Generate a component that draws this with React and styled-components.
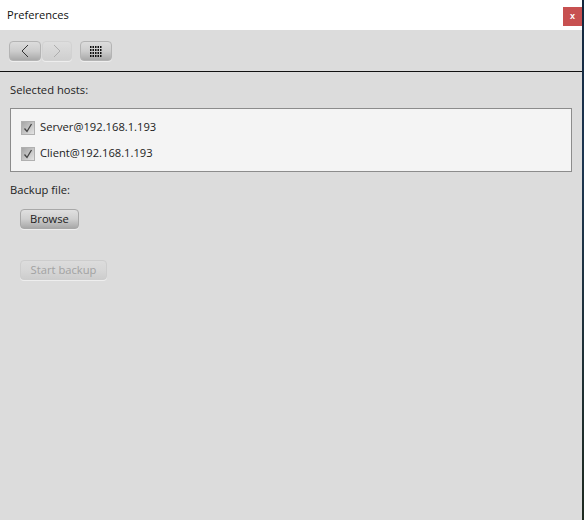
import React from 'react';
import styled, { createGlobalStyle } from 'styled-components';

const Global = createGlobalStyle`
  html, body { margin: 0; padding: 0; background: #dcdcdc; }
  body { width: 584px; height: 520px; overflow: hidden; font-family: "Open Sans", "Noto Sans", "Liberation Sans", sans-serif; }
`;

const Screen = styled.div`
  display: flex;
  width: 584px;
  height: 520px;
`;
const Win = styled.div`
  flex: 1;
  display: flex;
  flex-direction: column;
  background: #dcdcdc;
  min-width: 0;
`;
const Edge = styled.div`
  width: 2px;
  background: linear-gradient(180deg, #12263c 0%, #1c3550 30%, #1e2a20 100%);
`;
const TitleBar = styled.div`
  height: 30px;
  flex: none;
  background: #fff;
  display: flex;
  align-items: center;
  justify-content: space-between;
  padding: 0 0 0 7px;
`;
const Title = styled.span`
  font-size: 11.1px;
  color: #111;
  margin-top: -1px;
`;
const Close = styled.div`
  width: 19px;
  height: 19px;
  margin-top: 3px;
  background: #c75050;
  color: #fff;
  font: bold 9px/18px "Liberation Sans", sans-serif;
  text-align: center;
`;
const Toolbar = styled.div`
  height: 42px;
  flex: none;
  box-sizing: border-box;
  border-bottom: 1px solid #111;
  display: flex;
  align-items: center;
  padding: 1px 0 0 9px;
`;
const ToolBtn = styled.div`
  width: ${p => p.$w}px;
  height: 20px;
  margin-left: ${p => p.$ml || 0}px;
  box-sizing: border-box;
  border-radius: 4px;
  border: 1px solid ${p => (p.$off ? '#d2d2d2' : '#b4b4b4')};
  background: ${p => (p.$off
    ? 'linear-gradient(180deg, #dedede 0%, #d6d6d6 55%, #cfcfcf 100%)'
    : 'linear-gradient(180deg, #dcdcdc 0%, #cdcdcd 50%, #a9a9a9 100%)')};
  box-shadow: 0 1px 0 #eeeeee;
  display: flex;
  align-items: center;
  justify-content: center;
`;
const Content = styled.div`
  flex: 1;
  display: flex;
  flex-direction: column;
  align-items: flex-start;
  padding: 0 10px 0 10px;
`;
const Label = styled.div`
  font-size: 11.2px;
  line-height: 16px;
  color: #222;
  margin-top: ${p => p.$mt}px;
  margin-bottom: ${p => p.$mb || 0}px;
`;
const HostBox = styled.div`
  box-sizing: border-box;
  width: 562px;
  height: 64px;
  background: #f4f4f4;
  border: 1px solid #8c8c8c;
  padding: 12px 0 0 10px;
  display: flex;
  flex-direction: column;
  gap: 13px;
`;
const Row = styled.div`
  display: flex;
  align-items: center;
  height: 13px;
  gap: 5px;
`;
const Check = styled.div`
  width: 14px;
  height: 14px;
  box-sizing: border-box;
  border: 1px solid #b0b0b0;
  background: linear-gradient(135deg, #a6a6a6 0%, #c4c4c4 50%, #e4e4e4 100%);
  display: flex;
  align-items: center;
  justify-content: center;
`;
const HostName = styled.span`
  font-size: 11.2px;
  color: #222;
  margin-top: -2px;
`;
const Button = styled.div`
  width: ${p => p.$w}px;
  height: 20px;
  margin: ${p => p.$mt}px 0 0 10px;
  box-sizing: border-box;
  border-radius: 4px;
  font-size: 11.2px;
  line-height: 18px;
  text-align: center;
  color: ${p => (p.$off ? '#a2a2a2' : '#1c1c1c')};
  border: 1px solid ${p => (p.$off ? '#cdcdcd' : '#a8a8a8')};
  background: ${p => (p.$off
    ? 'linear-gradient(180deg, #dcdcdc 0%, #d6d6d6 55%, #cdcdcd 100%)'
    : 'linear-gradient(180deg, #e0e0e0 0%, #cfcfcf 50%, #a8a8a8 100%)')};
  box-shadow: 0 1px 0 #eeeeee;
`;

const Chevron = ({ d, color }) => (
  <svg width="10" height="14" viewBox="0 0 10 14" fill="none" stroke={color} strokeWidth="0.9">
    <path d={d} />
  </svg>
);

const GridIcon = () => (
  <svg width="12" height="11" viewBox="0 0 12 11" fill="#111">
    {[0, 3, 6, 9].flatMap(y =>
      [0, 2.5, 5, 7.5, 10].map(x => <rect key={`${x}-${y}`} x={x} y={y} width="1.5" height="2" />)
    )}
  </svg>
);

const Tick = () => (
  <svg width="10" height="10" viewBox="0 0 10 10" fill="none" stroke="#444" strokeWidth="1.3">
    <path d="M1.5 5.5 L4 8.5 L8.5 1" />
  </svg>
);

const hosts = ['Server@192.168.1.193', 'Client@192.168.1.193'];

export default function App() {
  return (
    <Screen>
      <Global />
      <Win>
        <TitleBar>
          <Title>Preferences</Title>
          <Close>x</Close>
        </TitleBar>
        <Toolbar>
          <ToolBtn $w={32}><Chevron d="M8 1 L2 7 L8 13" color="#222" /></ToolBtn>
          <ToolBtn $w={30} $ml={1} $off><Chevron d="M2 1 L8 7 L2 13" color="#a8a8a8" /></ToolBtn>
          <ToolBtn $w={32} $ml={8}><GridIcon /></ToolBtn>
        </Toolbar>
        <Content>
          <Label $mt={10} $mb={10}>Selected hosts:</Label>
          <HostBox>
            {hosts.map(h => (
              <Row key={h}>
                <Check><Tick /></Check>
                <HostName>{h}</HostName>
              </Row>
            ))}
          </HostBox>
          <Label $mt={10}>Backup file:</Label>
          <Button $w={59} $mt={11}>Browse</Button>
          <Button $w={87} $mt={31} $off>Start backup</Button>
        </Content>
      </Win>
      <Edge />
    </Screen>
  );
}
